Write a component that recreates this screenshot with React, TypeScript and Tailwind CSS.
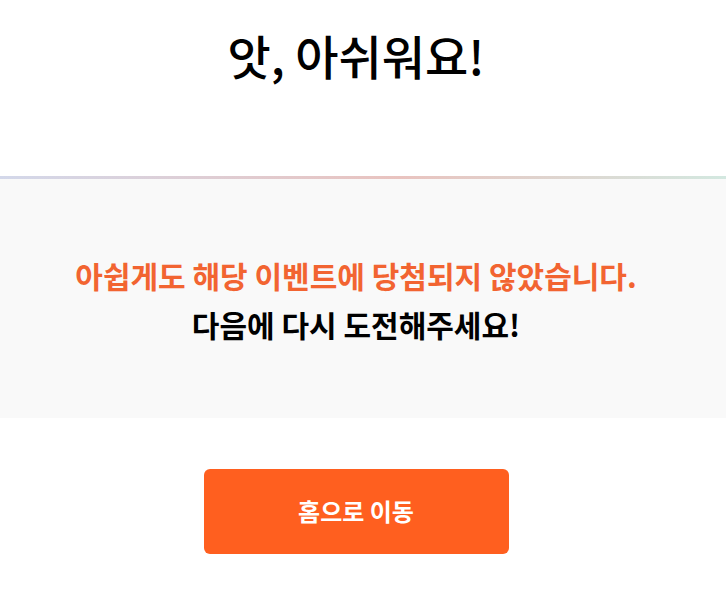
export default function App() {
  return (
    <div className="w-[726px] min-h-[615px] bg-white" style={{ fontFamily: '"Noto Sans CJK KR", "Noto Sans", sans-serif' }}>
      <div className="h-[176px] flex justify-center pt-[22px] pr-[14px]">
        <h1 className="text-[47px] leading-[66px] font-medium text-black">앗, 아쉬워요!</h1>
      </div>
      <div className="h-[3px] bg-[linear-gradient(90deg,#d3d8ea_0%,#e9c3bf_55%,#d3e8e0_100%)]" />
      <div className="h-[239px] bg-[#f9f9f9] flex flex-col items-center pt-[72px] pr-[14px]">
        <p className="text-[30px] leading-[49px] font-semibold text-[#f26431]">아쉽게도 해당 이벤트에 당첨되지 않았습니다.</p>
        <p className="text-[30px] leading-[49px] font-semibold text-black">다음에 다시 도전해주세요!</p>
      </div>
      <div className="flex justify-center pt-[51px] pr-[14px]">
        <button className="w-[305px] h-[85px] rounded-[6px] bg-[#ff5f1f] text-white text-[24px] font-bold pb-[2px]">홈으로 이동</button>
      </div>
    </div>
  );
}
